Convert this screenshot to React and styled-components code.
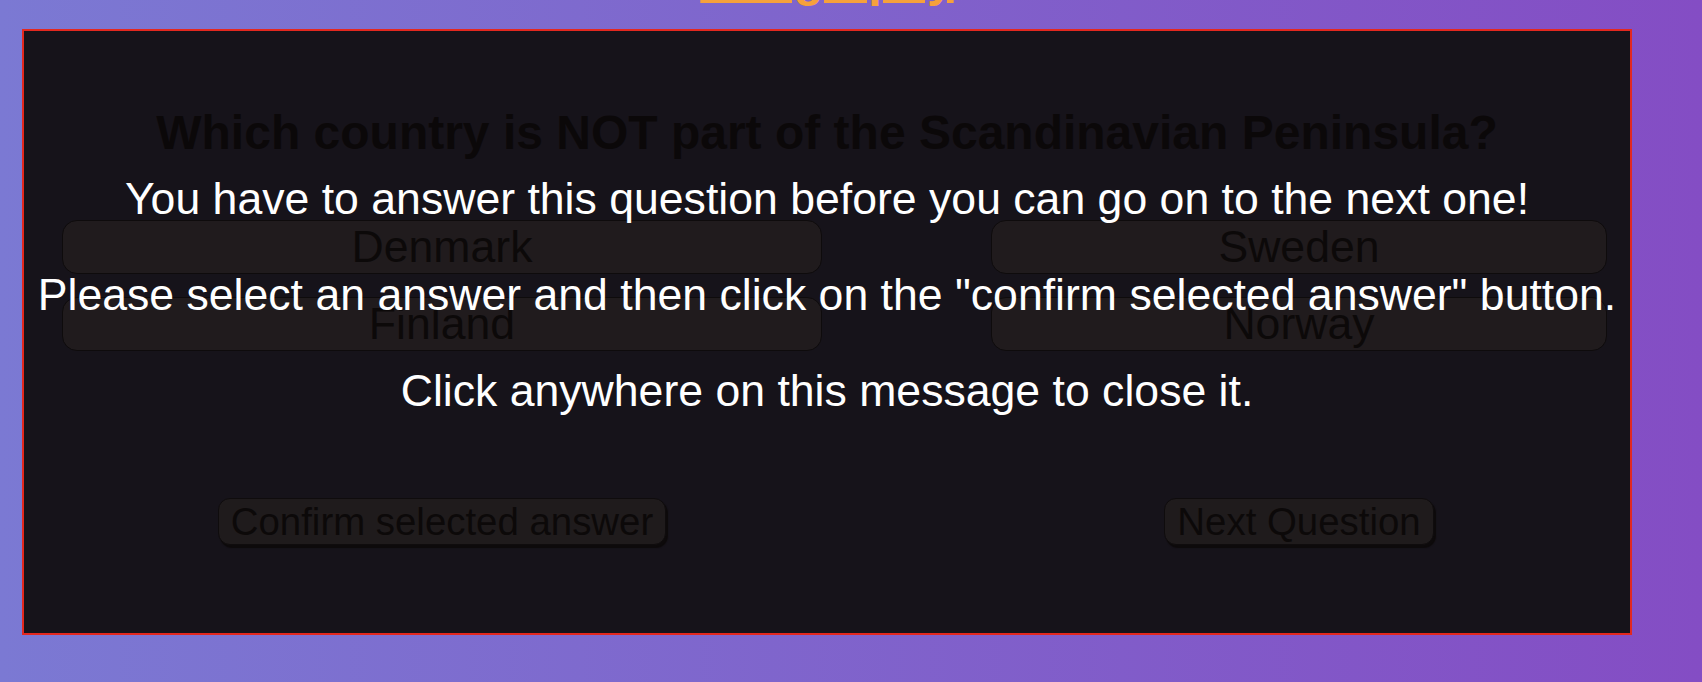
import React from "react";
import styled, { createGlobalStyle } from "styled-components";

const GlobalStyle = createGlobalStyle`
  html {
    min-height: 100%;
    background: linear-gradient(to right, #7b79d3, #844dc4);
  }
  body {
    margin: 0;
    min-height: 100vh;
    font-family: "Liberation Sans", Arial, Helvetica, sans-serif;
  }
`

const Page = styled.div`
  display: flow-root;
  padding-left: 22px;
  width: 1610px;
`

const Heading = styled.h1`
  margin: -48px 0 21px;
  font-size: 48px;
  line-height: 56px;
  font-weight: 700;
  text-align: center;
  color: #f6a13b;
  text-decoration: underline;
`

const Card = styled.div`
  position: relative;
  box-sizing: border-box;
  height: 606px;
  padding-top: 74px;
  border: 2px solid #e3281f;
  background: #16131a;
`

const Question = styled.h2`
  margin: 0;
  font-size: 48px;
  font-weight: 700;
  text-align: center;
  color: #0b0809;
`

const Columns = styled.div`
  display: grid;
  grid-template-columns: 760px 616px;
  column-gap: 169px;
  padding-left: 38px;
`

const Answers = styled(Columns)`
  margin-top: 60px;
  row-gap: 23px;
`

const Answer = styled.button`
  box-sizing: border-box;
  height: 54px;
  padding: 0;
  border: 1px solid #0e0b0c;
  border-radius: 15px;
  background: #201b1d;
  color: #0c0909;
  font-family: inherit;
  font-size: 44.6px;
  line-height: 52px;
`

const Actions = styled(Columns)`
  margin-top: 147px;
  justify-items: center;
`

const Action = styled.button`
  box-sizing: border-box;
  height: 47px;
  padding: 0 12px;
  border: 1px solid #0f0c0d;
  border-radius: 12px;
  background: #1f1b1c;
  color: #0c0909;
  font-family: inherit;
  font-size: 38.4px;
  line-height: 43px;
  box-shadow: 2px 3px 1px #0d0a0b;
`

const Overlay = styled.div`
  position: absolute;
  inset: 0;
  padding-top: 97px;
  text-align: center;
  color: #ffffff;
  font-size: 44.6px;
  cursor: pointer;

  p {
    margin: 1em 0;
    line-height: 1.16;
    white-space: nowrap;
  }
`

const answers = ["Denmark", "Sweden", "Finland", "Norway"];

export default function App() {
  return (
    <Page>
      <GlobalStyle />
      <Heading>Geography</Heading>
      <Card>
        <Question>Which country is NOT part of the Scandinavian Peninsula?</Question>
        <Answers>
          {answers.map((a) => (
            <Answer key={a}>{a}</Answer>
          ))}
        </Answers>
        <Actions>
          <Action>Confirm selected answer</Action>
          <Action>Next Question</Action>
        </Actions>
        <Overlay>
          <p>You have to answer this question before you can go on to the next one!</p>
          <p>Please select an answer and then click on the "confirm selected answer" button.</p>
          <p>Click anywhere on this message to close it.</p>
        </Overlay>
      </Card>
    </Page>
  );
}
